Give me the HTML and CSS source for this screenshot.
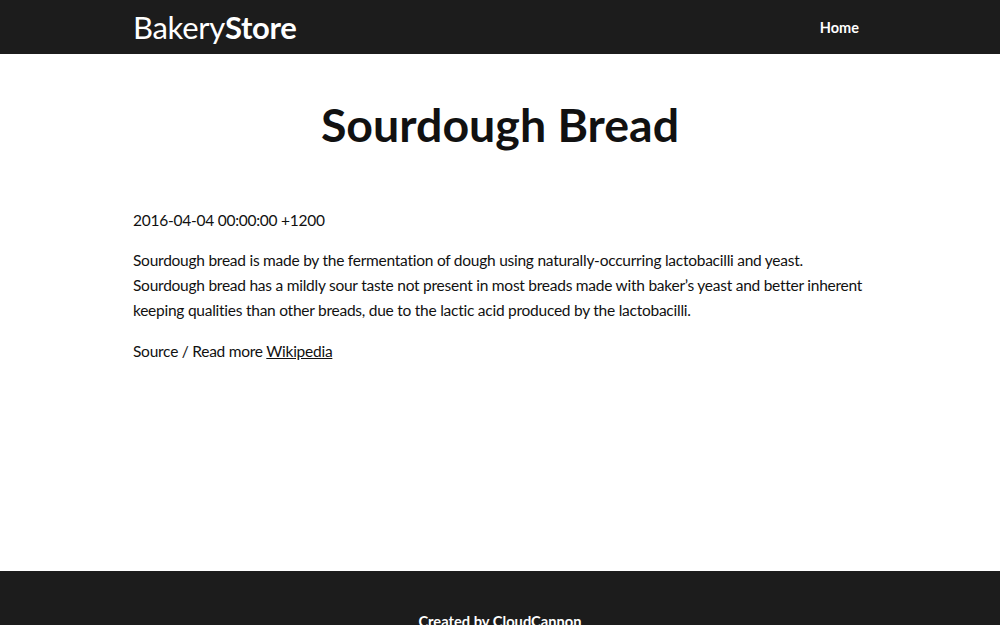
FILE: index.html
```html
<!DOCTYPE html>
<html lang="en">
<head>
<meta charset="utf-8">
<title>Sourdough Bread</title>
<link rel="stylesheet" href="styles.css">
</head>
<body>
<header class="site-header">
  <div class="container header-inner">
    <a class="logo" href="#">Bakery<strong>Store</strong></a>
    <nav class="nav"><a href="#">Home</a></nav>
  </div>
</header>
<main class="main">
  <h1 class="title">Sourdough Bread</h1>
  <div class="container content">
    <p class="date">2016-04-04 00:00:00 +1200</p>
    <p>Sourdough bread is made by the fermentation of dough using naturally-occurring lactobacilli and yeast. Sourdough bread has a mildly sour taste not present in most breads made with baker’s yeast and better inherent keeping qualities than other breads, due to the lactic acid produced by the lactobacilli.</p>
    <p>Source / Read more <a href="#">Wikipedia</a></p>
  </div>
</main>
<footer class="site-footer">
  <p>Created by <a href="#">CloudCannon</a></p>
</footer>
</body>
</html>
```
FILE: styles.css
```css
* { box-sizing: border-box; }
html, body { margin: 0; padding: 0; }
body {
  font-family: Lato, "Noto Sans", sans-serif;
  color: #111;
  background: #fff;
  font-size: 15.5px;
  letter-spacing: -0.25px;
  line-height: 25px;
}
a { color: inherit; }
.container {
  width: 736px;
  margin: 0 auto;
  padding-left: 1px;
}
.site-header {
  background: #1c1c1c;
  height: 54px;
}
.header-inner {
  display: flex;
  align-items: center;
  justify-content: space-between;
  height: 54px;
}
.logo {
  color: #fff;
  text-decoration: none;
  font-size: 31px;
  font-weight: 400;
  letter-spacing: -0.3px;
}
.logo strong { font-weight: 700; }
.nav a {
  color: #fff;
  text-decoration: none;
  font-weight: 700;
  font-size: 14.5px;
  letter-spacing: 0;
  margin-right: 9px;
}
.main {
  min-height: 517px;
}
.title {
  margin: 0;
  padding-top: 42px;
  font-size: 46.5px;
  line-height: 56px;
  text-align: center;
  font-weight: 700;
  letter-spacing: 0;
  color: #111;
}
.content {
  padding-top: 56px;
}
.content p { margin: 0 0 16px; }
.date { margin-bottom: 15px !important; }
.site-footer {
  background: #1c1c1c;
  color: #fff;
  height: 70px;
  overflow: hidden;
  text-align: center;
  padding-top: 38px;
  font-weight: 700;
  font-size: 14.7px;
  letter-spacing: 0;
}
.site-footer p { margin: 0; }
.site-footer a { text-decoration: none; }
```
